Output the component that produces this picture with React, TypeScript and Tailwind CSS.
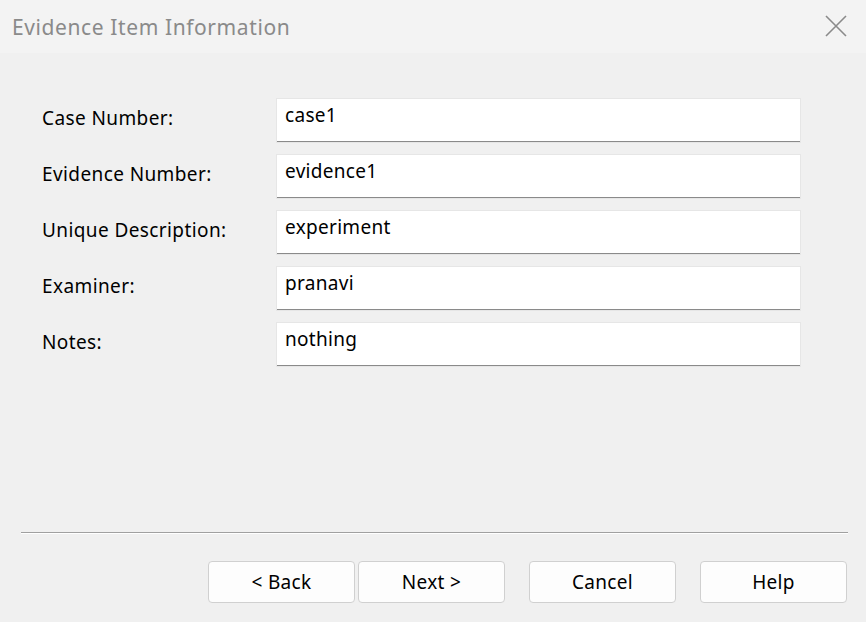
import React from "react";

const rows = [
  ["Case Number:", "case1"],
  ["Evidence Number:", "evidence1"],
  ["Unique Description:", "experiment"],
  ["Examiner:", "pranavi"],
  ["Notes:", "nothing"],
];

export default function App() {
  return (
    <div
      className="w-[866px] h-[622px] bg-[#f0f0f0] flex flex-col overflow-hidden"
      style={{ fontFamily: '"Noto Sans", "Open Sans", sans-serif' }}
    >
      <div className="h-[53px] bg-[#f3f3f3] flex items-center justify-between pl-[12px] pr-[18px]">
        <div className="text-[21px] tracking-[0.6px] text-[#8a8a8a] leading-none mt-[1px]">Evidence Item Information</div>
        <svg width="22" height="22" viewBox="0 0 22 22" className="mr-[1px] -mt-[1px]">
          <path d="M1 1 L21 21 M21 1 L1 21" stroke="#8a8a8a" strokeWidth="1.6" />
        </svg>
      </div>
      <div className="flex flex-col gap-[13px] pt-[46px] pl-[42px]">
        {rows.map(([label, value]) => (
          <div key={label} className="flex items-start h-[43px]">
            <div className="w-[235px] text-[19px] tracking-[0.4px] text-black leading-none pt-[10px]">{label}</div>
            <div className="w-[523px] h-[43px] bg-white border-b border-[#8a8a8a] shadow-[0_0_0_1px_#e6e6e6] text-[19px] tracking-[0.3px] text-black leading-none pt-[7px] pl-[8px]">
              {value}
            </div>
          </div>
        ))}
      </div>
      <div className="flex-1" />
      <div className="mx-[21px] w-[827px] h-[2px] border-t border-[#a0a0a0] border-b border-b-white" />
      <div className="flex justify-end pr-[19px] pt-[27px] pb-[19px]">
        {["< Back", "Next >", "Cancel", "Help"].map((t, i) => (
          <button
            key={t}
            className={`w-[147px] h-[42px] bg-[#fdfdfd] border border-[#d0d0d0] rounded-[4px] text-[19px] tracking-[0.3px] text-black leading-none ${
              i === 1 ? "ml-[3px]" : i === 0 ? "" : "ml-[24px]"
            }`}
          >
            {t}
          </button>
        ))}
      </div>
    </div>
  );
}
